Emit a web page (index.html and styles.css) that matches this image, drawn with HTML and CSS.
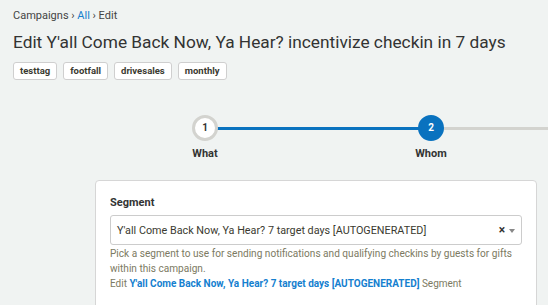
FILE: index.html
```html
<!DOCTYPE html>
<html lang="en">
<head>
    <meta charset="UTF-8" />
    <meta name="viewport" content="width=device-width, initial-scale=1.0" />
    <title>Edit Campaign</title>
    <link rel="stylesheet" href="styles.css">
</head>
<body>
    <div class="page">
      <div class="breadcrumb">Campaigns › <a href="#">All</a> › Edit</div>
      <h1>Edit Y'all Come Back Now, Ya Hear? incentivize checkin in 7 days</h1>

      <div class="tags">
        <span class="tag">testtag</span>
        <span class="tag">footfall</span>
        <span class="tag">drivesales</span>
        <span class="tag">monthly</span>
      </div>

      <div class="stepper">
        <div class="step done">
          <div class="circle">1</div>
          <div class="step-label">What</div>
        </div>
        <div class="step active">
          <div class="circle">2</div>
          <div class="step-label">Whom</div>
        </div>
        <div class="step-tail"></div>
      </div>

      <div class="panel">
        <label class="field-label">Segment</label>
        <div class="select">
          <span class="select-value">Y'all Come Back Now, Ya Hear? 7 target days [AUTOGENERATED]</span>
          <span class="select-clear">×</span>
          <span class="select-arrow"></span>
        </div>
        <p class="help">Pick a segment to use for sending notifications and qualifying checkins by guests for gifts within this campaign.</p>
        <p class="help edit-link">Edit <a href="#">Y'all Come Back Now, Ya Hear? 7 target days [AUTOGENERATED]</a> Segment</p>
      </div>
    </div>
</body>
</html>
```

FILE: styles.css
```css
html, body {
  margin: 0;
  padding: 0;
  background-color: #f0f3f2;
  overflow: hidden;
}
body {
  font-family: Roboto, "Liberation Sans", sans-serif;
  color: #333;
}
.page {
  padding: 8px 13px 0 13px;
}
a {
  color: #1580cf;
  text-decoration: none;
}
.breadcrumb {
  font-size: 11px;
  line-height: 16px;
  color: #444;
}
h1 {
  font-size: 17.3px;
  font-weight: 400;
  line-height: 22px;
  margin: 7px 0 9px 0;
  color: #333;
  white-space: nowrap;
}
.tags {
  display: flex;
  gap: 6px;
}
.tag {
  background-color: #fff;
  border: 1px solid #cfcfcf;
  border-radius: 3px;
  font-size: 9.5px;
  font-weight: 700;
  line-height: 16px;
  padding: 0 6px;
  color: #3a3a30;
}
.stepper {
  display: flex;
  margin: 35px 0 0 79px;
  width: 678px;
}
.step {
  position: relative;
  width: 226px;
  display: flex;
  flex-direction: column;
  align-items: center;
}
.step + .step::before {
  content: "";
  position: absolute;
  top: 12px;
  left: -50%;
  width: 100%;
  height: 3px;
  background-color: #d3d3cf;
}
.step-tail {
  position: relative;
  top: 12px;
  left: -113px;
  width: 226px;
  height: 3px;
  flex-shrink: 0;
  background-color: #d3d3cf;
}
.step.done + .step::before {
  background-color: #0a72bf;
}
.circle {
  position: relative;
  z-index: 1;
  box-sizing: border-box;
  width: 26px;
  height: 26px;
  border-radius: 50%;
  border: 3px solid #d3d3cf;
  background-color: #fff;
  font-size: 10px;
  font-weight: 700;
  line-height: 20px;
  text-align: center;
  color: #333;
}
.step.active .circle {
  background-color: #0a72bf;
  border-color: #0a72bf;
  color: #fff;
}
.step-label {
  margin-top: 6px;
  font-size: 11px;
  font-weight: 700;
  color: #333;
}
.panel {
  margin: 20px 0 0 82px;
  width: 412px;
  height: 200px;
  background-color: #fff;
  border: 1px solid #d6d6d6;
  border-radius: 4px;
  padding: 15px 14px 12px 14px;
}
.field-label {
  display: block;
  font-size: 11px;
  font-weight: 700;
  color: #333;
  margin-bottom: 6px;
}
.select {
  display: flex;
  align-items: center;
  height: 28px;
  border: 1px solid #ccc;
  border-radius: 3px;
  padding: 0 6px;
  font-size: 10.8px;
  color: #3a3a30;
}
.select-value {
  flex: 1;
}
.select-clear {
  font-weight: 700;
  font-size: 12px;
  color: #333;
  margin-right: 4px;
}
.select-arrow {
  width: 0;
  height: 0;
  border-left: 3px solid transparent;
  border-right: 3px solid transparent;
  border-top: 4px solid #888;
  margin-top: 2px;
}
.help {
  margin: 1px 0 0 0;
  font-size: 10.1px;
  line-height: 15px;
  color: #7c7a62;
}
.edit-link {
  margin-top: 0;
  font-size: 10px;
}
.edit-link a {
  font-weight: 700;
}
```
